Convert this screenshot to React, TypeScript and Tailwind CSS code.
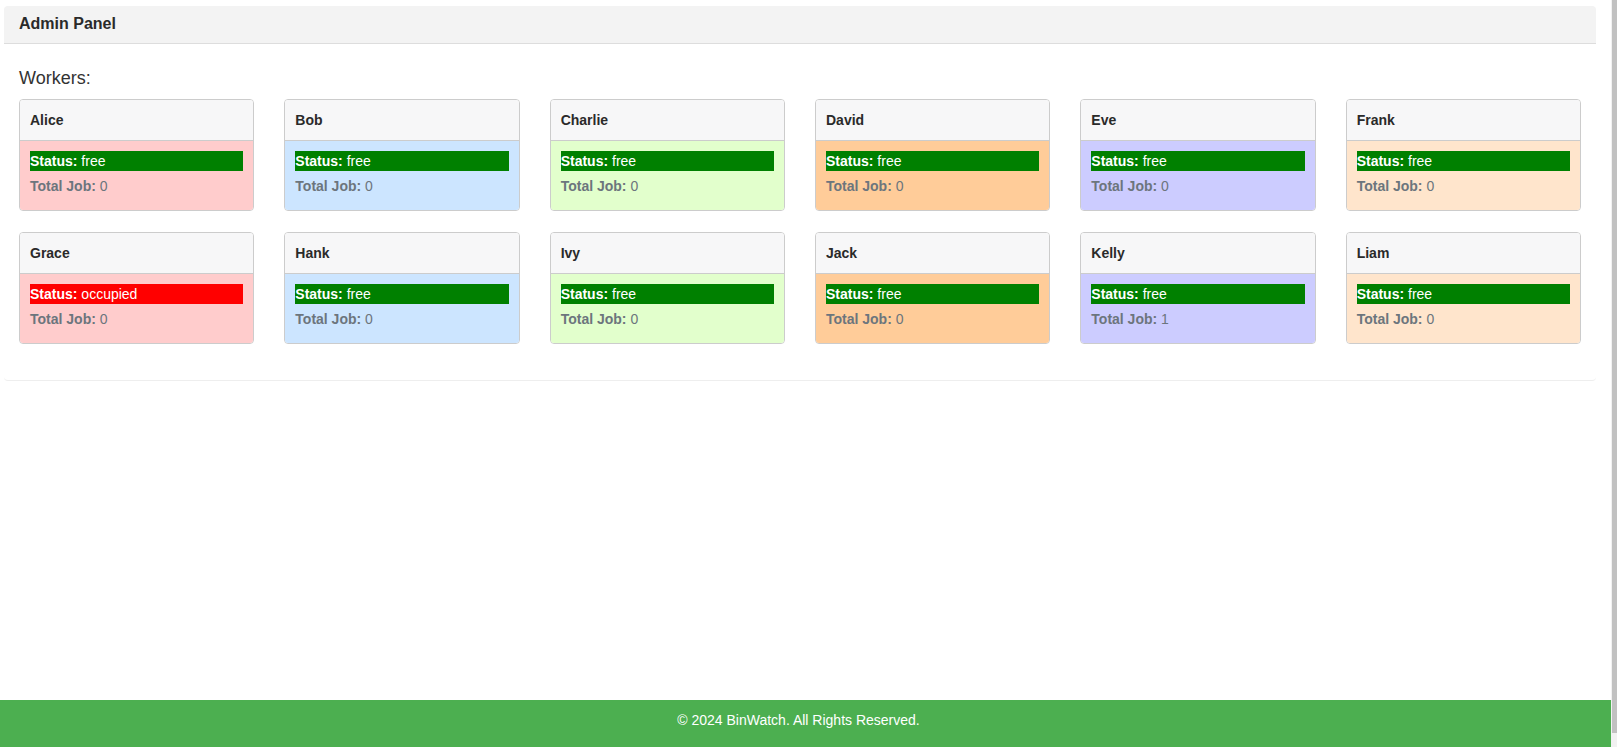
const WORKERS = [
  { name: "Alice", bg: "bg-[#ffcccc]", status: "free", jobs: 0 },
  { name: "Bob", bg: "bg-[#cce5ff]", status: "free", jobs: 0 },
  { name: "Charlie", bg: "bg-[#e2ffcc]", status: "free", jobs: 0 },
  { name: "David", bg: "bg-[#ffcc99]", status: "free", jobs: 0 },
  { name: "Eve", bg: "bg-[#ccccff]", status: "free", jobs: 0 },
  { name: "Frank", bg: "bg-[#ffe5cc]", status: "free", jobs: 0 },
  { name: "Grace", bg: "bg-[#ffcccc]", status: "occupied", jobs: 0 },
  { name: "Hank", bg: "bg-[#cce5ff]", status: "free", jobs: 0 },
  { name: "Ivy", bg: "bg-[#e2ffcc]", status: "free", jobs: 0 },
  { name: "Jack", bg: "bg-[#ffcc99]", status: "free", jobs: 0 },
  { name: "Kelly", bg: "bg-[#ccccff]", status: "free", jobs: 1 },
  { name: "Liam", bg: "bg-[#ffe5cc]", status: "free", jobs: 0 },
]

function WorkerCard({ worker }: { worker: (typeof WORKERS)[number] }) {
  return (
    <div className="overflow-hidden rounded-[4px] border border-[#cccccc]">
      <div className="border-b border-[#cccccc] bg-[#f7f7f8] px-[10px] py-[10px] text-[14px] font-bold leading-[20px] text-[#2a2a2a]">
        {worker.name}
      </div>
      <div className={`${worker.bg} px-[10px] pt-[10px] pb-[14px]`}>
        <div
          className={`h-[20px] text-[14px] leading-[20px] text-white ${
            worker.status === "free" ? "bg-[#008000]" : "bg-[#ff0000]"
          }`}
        >
          <span className="font-bold">Status:</span> {worker.status}
        </div>
        <div className="mt-[5px] text-[14px] leading-[20px] text-[#6c757d]">
          <span className="font-bold">Total Job:</span> {worker.jobs}
        </div>
      </div>
    </div>
  )
}

export default function App() {
  return (
    <div className="flex h-[747px] w-full overflow-hidden bg-white font-['Liberation_Sans',Arial,sans-serif] text-[#333]">
      <div className="flex min-w-0 flex-1 flex-col">
        <div className="ml-[4px] mr-[15px] mt-[6px] rounded-[4px] border-b border-[#eeeeee]">
          <div className="rounded-t-[4px] border-b border-[#dddddd] bg-[#f3f3f3] px-[15px] pt-[8px] pb-[9px] text-[16px] font-bold leading-[20px] text-[#2a2a2a]">
            Admin Panel
          </div>
          <div className="px-[15px] pt-[23px] pb-[36px]">
            <h3 className="mb-[10px] text-[18px] leading-[22px]">Workers:</h3>
            <div className="grid grid-cols-6 gap-x-[30px] gap-y-[21px]">
              {WORKERS.map((w) => (
                <WorkerCard key={w.name} worker={w} />
              ))}
            </div>
          </div>
        </div>
        <div className="flex-1" />
        <footer className="h-[47px] bg-[#4caf50] pr-[14px] pt-[10px] text-center text-[14px] leading-[20px] text-white">
          © 2024 BinWatch. All Rights Reserved.
        </footer>
      </div>
      <div className="flex w-[6px] flex-col bg-[#f1f1f1] pl-[1px]">
        <div className="h-[733px] bg-[#c1c1c1]" />
      </div>
    </div>
  )
}
